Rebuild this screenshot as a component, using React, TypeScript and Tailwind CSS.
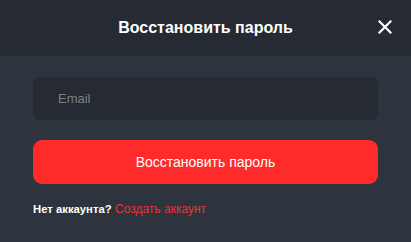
import React from "react";

export default function App() {
  return (
    <div
      className="w-[411px] h-[242px] bg-[#2e343e] flex flex-col"
      style={{ fontFamily: '"Liberation Sans", Arial, sans-serif' }}
    >
      <div className="h-[56px] bg-[#252a33] flex items-center justify-center relative shrink-0">
        <h2 className="text-[16px] font-bold text-white">Восстановить пароль</h2>
        <button className="absolute right-[19px] top-[20px] w-[14px] h-[14px] flex items-center justify-center">
          <svg width="14" height="14" viewBox="0 0 14 14" fill="none">
            <path d="M1.5 1.5L12.5 12.5M12.5 1.5L1.5 12.5" stroke="white" strokeWidth="2.2" strokeLinecap="square" />
          </svg>
        </button>
      </div>
      <div className="px-[33px] pt-[21px] flex flex-col">
        <div className="h-[43px] rounded-[6px] bg-[#252a33] flex items-center pl-[25px]">
          <span className="text-[13px] text-[#7c818c]">Email</span>
        </div>
        <button className="mt-[20px] h-[44px] rounded-[9px] bg-[#ff2a2a] text-white text-[14px] flex items-center justify-center">
          Восстановить пароль
        </button>
        <div className="mt-[17px] text-[12px] leading-[16px]">
          <span className="font-bold text-[11.3px] text-white">Нет аккаунта?</span>{" "}
          <span className="text-[#f03030]">Создать аккаунт</span>
        </div>
      </div>
    </div>
  );
}
